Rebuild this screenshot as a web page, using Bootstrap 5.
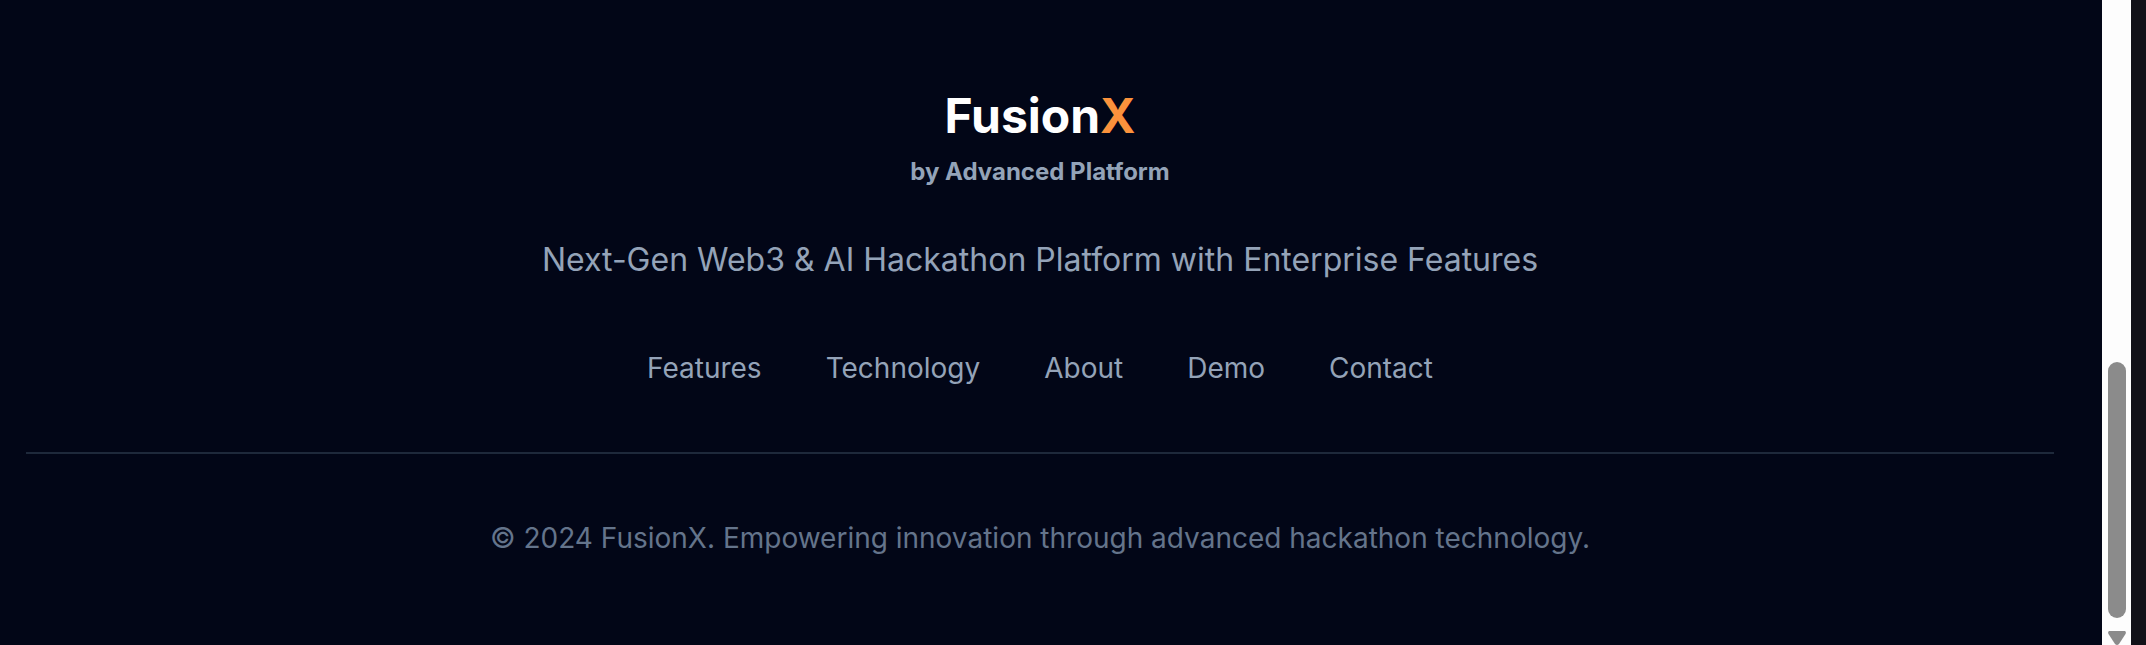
<!DOCTYPE html>
<html lang="en">
<head>
<meta charset="utf-8">
<meta name="viewport" content="width=device-width, initial-scale=1">
<title>FusionX</title>
<link rel="stylesheet" href="https://cdn.jsdelivr.net/npm/bootstrap@5.3.0/dist/css/bootstrap.min.css">
<style>
  body { font-family: Inter, "Liberation Sans", sans-serif; background: #020617; color: #94a3b8; }
  .site-footer { padding: 92px 48px 84px 26px; }
  .brand { font-size: 48px; line-height: 48px; color: #fff; }
  .brand-x { color: #fb923c; }
  .byline { font-size: 24px; line-height: 32px; }
  .tagline { font-size: 32px; line-height: 48px; }
  .footer-links { gap: 16px 64px; font-size: 28px; line-height: 40px; }
  .footer-links a { color: #94a3b8; }
  .footer-links a:hover { color: #fff; }
  .legal { border-top: 2px solid #1e293b; font-size: 28px; line-height: 40px; color: #64748b; }
  .gap-top-md { margin-top: 48px; }
  .gap-top-lg { margin-top: 64px; }
  .legal-pad { padding-top: 64px; }
  .track { width: 29px; background: #fdfdfd; padding-bottom: 27px; }
  .thumb { width: 18px; height: 256px; border-radius: 9px; background: #8b8b8b; }
  .arrow-down { position: absolute; bottom: 0; left: 6px; }
  .edge { width: 15px; background: #111118; }
</style>
</head>
<body>
<div class="d-flex min-vh-100">
  <footer class="site-footer flex-grow-1 text-center">
    <h2 class="brand fw-bold mb-3">Fusion<span class="brand-x">X</span></h2>
    <p class="byline fw-bold mb-0">by Advanced Platform</p>
    <p class="tagline gap-top-md mb-0">Next-Gen Web3 &amp; AI Hackathon Platform with Enterprise Features</p>
    <nav class="footer-links gap-top-lg d-flex flex-wrap justify-content-center" aria-label="Footer">
      <a class="text-decoration-none" href="#features">Features</a>
      <a class="text-decoration-none" href="#technology">Technology</a>
      <a class="text-decoration-none" href="#about">About</a>
      <a class="text-decoration-none" href="#demo">Demo</a>
      <a class="text-decoration-none" href="#contact">Contact</a>
    </nav>
    <div class="legal gap-top-lg legal-pad">
      <p class="mb-0">© 2024 FusionX. Empowering innovation through advanced hackathon technology.</p>
    </div>
  </footer>
  <div class="track position-relative flex-shrink-0 d-flex align-items-end justify-content-center" aria-hidden="true">
    <div class="thumb"></div>
    <svg class="arrow-down" width="18" height="14" viewBox="0 0 18 14"><path d="M1 0H17Q18.500 1 17.500 3L11 13Q9 15 7 13L.5 3Q-.5 1 1 0Z" fill="#8b8b8b"/></svg>
  </div>
  <div class="edge flex-shrink-0" aria-hidden="true"></div>
</div>
<script src="https://cdn.jsdelivr.net/npm/bootstrap@5.3.0/dist/js/bootstrap.bundle.min.js"></script>
</body>
</html>
